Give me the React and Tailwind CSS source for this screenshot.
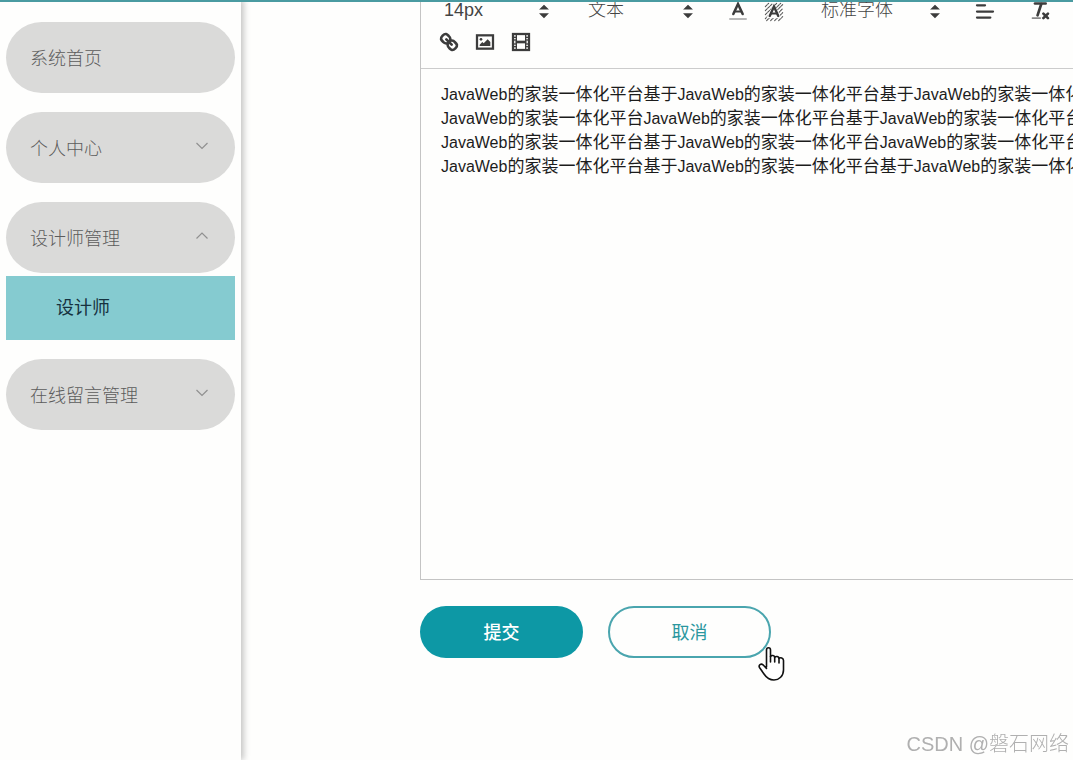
import React from "react";

const menu = [
  { label: "系统首页" },
  { label: "个人中心", arrow: "down" },
  { label: "设计师管理", arrow: "up", children: ["设计师"] },
  { label: "在线留言管理", arrow: "down" },
];

const full = ["JavaWeb", "的家装一体化平台基于"];
const short = ["JavaWeb", "的家装一体化平台"];

const paragraphs = [
  [full, full, short],
  [short, full, short],
  [full, short, short],
  [full, full, short],
];

function Chevron({ up }) {
  return (
    <svg width="14" height="8" viewBox="0 0 14 8" fill="none" stroke="#909090" strokeWidth="1.2">
      <path d={up ? "M1.5 6.5L7 1L12.5 6.5" : "M1.5 1L7 6.5L12.5 1"} />
    </svg>
  );
}

function Sidebar() {
  return (
    <aside className="relative z-10 w-[241px] shrink-0 bg-[#fefefd] px-[6px] pt-[22px] shadow-[3px_0_6px_rgba(0,0,0,0.22)]">
      <nav className="flex flex-col gap-[19px] text-[18px]">
        {menu.map((item) => (
          <div key={item.label}>
            <button className="flex h-[71px] w-full items-center justify-between rounded-full bg-[#dadad9] pt-1 pr-[26px] pl-6 font-light text-[#5c5c5c]">
              {item.label}
              {item.arrow && (
                <span className="pb-2">
                  <Chevron up={item.arrow === "up"} />
                </span>
              )}
            </button>
            {item.children?.map((child) => (
              <a
                key={child}
                href="#"
                className="mt-[3px] flex h-16 items-center bg-[#85cbd0] pl-[50px] text-[#16323f]"
              >
                {child}
              </a>
            ))}
          </div>
        ))}
      </nav>
    </aside>
  );
}

function Picker({ label, value, className }) {
  return (
    <div className={`relative h-6 ${className}`}>
      <select
        aria-label={label}
        defaultValue={value}
        className="block h-5 w-full appearance-none bg-transparent text-[18px] leading-5 font-light text-[#444]"
      >
        <option>{value}</option>
      </select>
      <svg
        viewBox="0 0 18 18"
        className="pointer-events-none absolute top-0 right-0 h-6 w-6 fill-[#3c3c3c] stroke-[#3c3c3c]"
        strokeWidth="1"
      >
        <polygon points="6.5 10.5 9 13 11.5 10.5" />
        <polygon points="6.5 6.7 9 4.2 11.5 6.7" />
      </svg>
    </div>
  );
}

function ToolButton({ label, children }) {
  return (
    <button aria-label={label} className="flex h-6 w-9 items-center justify-center">
      <svg viewBox="0 0 18 18" className="h-6 w-6 fill-none stroke-[#3c3c3c]" strokeWidth="2" strokeLinecap="round">
        {children}
      </svg>
    </button>
  );
}

function Toolbar() {
  return (
    <div className="flex flex-col gap-[6px] border-b border-[#ccc] pb-[14px] pl-[10px]">
      <div className="flex">
        <Picker label="字号" value="14px" className="ml-[13px] w-28 shrink-0" />
        <Picker label="标题" value="文本" className="ml-8 w-28 shrink-0" />
        <div className="ml-5 flex">
          <ToolButton label="文字颜色">
            <line x1="3" x2="15" y1="14.2" y2="14.2" strokeWidth="1.5" stroke="#b8b8b8" />
            <polyline points="5.5 10.5 9 3 12.5 10.5" strokeWidth="1.9" />
            <line x1="7" x2="11" y1="8.6" y2="8.6" strokeWidth="1.5" />
          </ToolButton>
          <ToolButton label="背景颜色">
            <path
              d="M2.5 5L5 2.5M2.5 8L8 2.5M2.5 11L11 2.5M2.5 14L14 2.5M3.5 15.5L15.5 3.5M6.5 15.5L15.5 6.5M9.5 15.5L15.5 9.5M12.5 15.5L15.5 12.5"
              strokeWidth="0.8"
              stroke="#555"
              strokeDasharray="1.8 0.8"
            />
            <polygon points="5 12.5 9 4.5 13 12.5" fill="#fefefd" stroke="#fefefd" />
            <polyline points="5.8 12 9 4.8 12.2 12" strokeWidth="1.8" />
            <line x1="7" x2="11" y1="10.2" y2="10.2" strokeWidth="1.5" />
          </ToolButton>
        </div>
        <Picker label="字体" value="标准字体" className="ml-[29px] w-[126px] shrink-0" />
        <div className="ml-5 flex gap-5">
          <ToolButton label="对齐">
            <line x1="3" x2="15" y1="8.7" y2="8.7" strokeWidth="1.7" />
            <line x1="3" x2="13" y1="13.2" y2="13.2" strokeWidth="1.7" />
            <line x1="3" x2="9" y1="4" y2="4" strokeWidth="1.7" />
          </ToolButton>
          <ToolButton label="清除格式">
            <line x1="4.5" x2="12.5" y1="2.6" y2="2.6" />
            <line x1="6.4" x2="9.2" y1="11.5" y2="3" />
            <line x1="10.8" x2="14.2" y1="10.2" y2="13.6" />
            <line x1="14.2" x2="10.8" y1="10.2" y2="13.6" />
            <rect x="2" y="13" width="7" height="1.2" rx="0.5" fill="#888" stroke="none" />
          </ToolButton>
        </div>
      </div>
      <div className="flex">
        <ToolButton label="链接">
          <line x1="7" x2="11" y1="7" y2="11" />
          <path d="M8.9,4.577a3.476,3.476,0,0,1,.36,4.679A3.476,3.476,0,0,1,4.577,8.9C3.185,7.5,2.035,6.4,4.217,4.217S7.5,3.185,8.9,4.577Z" />
          <path d="M13.423,9.1a3.476,3.476,0,0,0-4.679-.36,3.476,3.476,0,0,0,.36,4.679c1.392,1.392,2.5,2.542,4.679.36S14.815,10.5,13.423,9.1Z" />
        </ToolButton>
        <ToolButton label="图片">
          <rect x="3" y="4" width="12" height="10" strokeWidth="1.7" />
          <circle cx="6" cy="7" r="1" fill="#3c3c3c" stroke="none" />
          <polyline points="5 12 5 11 7 9 8 10 11 7 13 9 13 12 5 12" fill="#3c3c3c" stroke="none" />
        </ToolButton>
        <ToolButton label="视频">
          <rect x="3" y="3" width="12" height="12" strokeWidth="1.7" />
          <g fill="#3c3c3c" stroke="none">
            <rect x="5" y="3" width="1" height="12" />
            <rect x="12" y="3" width="1" height="12" />
            <rect x="5" y="8" width="8" height="2" />
            <rect x="3" y="5" width="3" height="1" />
            <rect x="3" y="7" width="3" height="1" />
            <rect x="3" y="10" width="3" height="1" />
            <rect x="3" y="12" width="3" height="1" />
            <rect x="12" y="5" width="3" height="1" />
            <rect x="12" y="7" width="3" height="1" />
            <rect x="12" y="10" width="3" height="1" />
            <rect x="12" y="12" width="3" height="1" />
          </g>
        </ToolButton>
      </div>
    </div>
  );
}

function Editor() {
  return (
    <div className="overflow-hidden border-b border-l border-[#c4c4c4]">
      <Toolbar />
      <div
        role="textbox"
        aria-label="内容"
        aria-multiline="true"
        contentEditable
        suppressContentEditableWarning
        className="min-h-[510px] py-[14px] pl-5 text-[17px] leading-6 whitespace-nowrap text-[#1c1c1c] outline-none"
      >
        {paragraphs.map((line, i) => (
          <p key={i} className="h-6">
            {line.map(([latin, text], j) => (
              <React.Fragment key={j}>
                <span className="text-[16px]">{latin}</span>
                {text}
              </React.Fragment>
            ))}
          </p>
        ))}
      </div>
    </div>
  );
}

function HandCursor() {
  return (
    <svg
      width="27"
      height="36"
      viewBox="0 0 27 36"
      className="pointer-events-none absolute top-10 left-[150px]"
      fill="#fff"
      stroke="#111"
      strokeWidth="1.6"
      strokeLinejoin="round"
      strokeLinecap="round"
    >
      <path d="M8.5 21V4C8.5 1 12.5 1 12.5 4V10.5C13.5 8.8 16.5 9.4 16.7 11.3C18 9.8 20.8 10.4 21 12.3C22.4 11.2 25.5 11.8 25.5 14.5V24C25.5 30 21 34 16 34C11 34 8 31 6 28L1.5 21.5C.2 19.2 3 17.2 5 18.8L8.5 22.5" />
      <path d="M12.5 10.5V16M16.7 11.3V16M21 12.3V17" fill="none" />
    </svg>
  );
}

function App() {
  return (
    <div className="flex min-h-screen overflow-hidden bg-[#fefefd] font-['Liberation_Sans','Noto_Sans_CJK_SC',sans-serif]">
      <header className="fixed inset-x-0 top-0 z-20 h-[2px] bg-[#4a9ba1]" />
      <Sidebar />
      <main className="min-w-0 flex-1 pl-[179px]">
        <Editor />
        <div className="flex gap-[25px] pt-[26px] text-[18px]">
          <button className="h-[52px] w-[163px] rounded-full bg-[#0d98a5] pt-[2px] font-medium text-white">提交</button>
          <div className="relative">
            <button className="h-[52px] w-[163px] rounded-full border-2 border-[#4aa5ae] pt-[2px] text-[#2b979f]">
              取消
            </button>
            <HandCursor />
          </div>
        </div>
      </main>
      <p className="fixed right-1 bottom-[2px] text-[20px] leading-7 font-light text-[#b0b0b0]">CSDN @磐石网络</p>
    </div>
  );
}

export default App;
